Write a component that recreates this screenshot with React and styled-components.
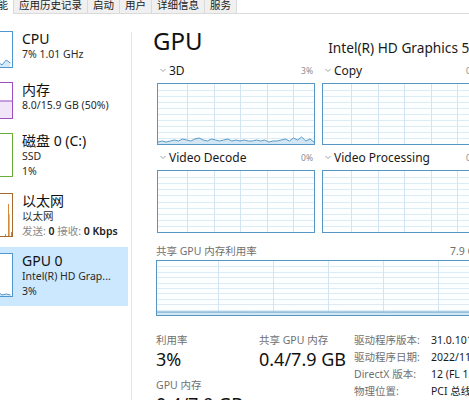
import React from 'react';
import styled, { createGlobalStyle } from 'styled-components';

const GlobalStyle = createGlobalStyle`
  html, body {
    margin: 0;
    padding: 0;
    background: #ffffff;
    overflow: hidden;
  }
  body {
    width: 469px;
    height: 400px;
    font-family: "Noto Sans", "Noto Sans CJK SC", sans-serif;
    color: #1a1a1a;
  }
`;

const Window = styled.div`
  width: 640px;
  height: 400px;
  margin-left: -60px;
  display: flex;
  flex-direction: column;
  overflow: hidden;
`;

const TabBar = styled.div`
  display: flex;
  height: 13px;
  padding-left: 10px;
  border-bottom: 1px solid #dadada;
`;

const Tab = styled.div`
  height: ${p => (p.$active ? '14px' : '13px')};
  padding: 0 5px;
  font-size: 10.5px;
  line-height: 11px;
  color: #1a1a1a;
  background: ${p => (p.$active ? '#ffffff' : '#f0f0f0')};
  border-right: 1px solid #dadada;
  white-space: nowrap;
`;

const Body = styled.div`
  flex: 1;
  display: flex;
  min-height: 0;
`;

const Sidebar = styled.div`
  width: 188px;
  flex-shrink: 0;
  padding-top: 11px;
  display: flex;
  flex-direction: column;
  gap: 1px;
`;

const Divider = styled.div`
  width: 1px;
  margin: 18px 0 0 3px;
  background: #e4e4e4;
  flex-shrink: 0;
`;

const SideItem = styled.div`
  display: flex;
  align-items: flex-start;
  gap: 9px;
  padding: 5px 0 7px 17px;
  background: ${p => (p.$selected ? '#cce8ff' : 'transparent')};
`;

const Thumb = styled.div`
  width: 56px;
  height: ${p => p.$h}px;
  margin-top: 1px;
  box-sizing: border-box;
  border: 1px solid ${p => p.$color};
  background: #ffffff;
  flex-shrink: 0;
  overflow: hidden;
  display: flex;
`;

const SideText = styled.div`
  display: flex;
  flex-direction: column;
  min-width: 0;
  white-space: nowrap;
`;

const SideTitle = styled.div`
  font-size: 14px;
  line-height: 17px;
  color: #111;
`;

const SideSub = styled.div`
  font-size: 10.5px;
  line-height: 15px;
  color: #2a2a2a;
`;

const Muted = styled.span`
  color: #8a8a8a;
`;

const Strong = styled.span`
  color: #222;
  font-weight: 600;
`;

const Main = styled.div`
  padding: 12px 0 0 24px;
  width: 326px;
  flex-shrink: 0;
  display: flex;
  flex-direction: column;
`;

const Header = styled.div`
  display: flex;
  align-items: flex-end;
  justify-content: space-between;
  white-space: nowrap;
  margin-right: -3px;
`;

const Heading = styled.div`
  font-size: 24px;
  line-height: 30px;
  margin-left: -3px;
  color: #111;
`;

const DeviceName = styled.div`
  font-size: 13.7px;
  line-height: 17px;
  color: #1a1a1a;
`;

const GraphGrid = styled.div`
  margin-top: 6px;
  display: grid;
  grid-template-columns: 158px 158px;
  column-gap: 7px;
  row-gap: 4px;
  margin-left: 1px;
`;

const Section = styled.div`
  display: flex;
  flex-direction: column;
  gap: 4px;
`;

const LabelRow = styled.div`
  height: 17px;
  display: flex;
  align-items: center;
  justify-content: space-between;
  padding: 0 2px 0 3px;
  white-space: nowrap;
`;

const LabelLeft = styled.div`
  display: flex;
  align-items: center;
  gap: 3px;
  font-size: 12px;
  color: #1a1a1a;
`;

const Percent = styled.div`
  font-size: 8.5px;
  color: #8a8a8a;
`;

const GraphBox = styled.div`
  width: ${p => p.$w}px;
  height: ${p => p.$h}px;
  box-sizing: border-box;
  border: 1px solid #5596c3;
  background: #fdfeff;
  display: flex;
  flex-shrink: 0;
`;

const SharedLabel = styled(LabelRow)`
  margin-top: 10px;
  padding: 0;
  margin-bottom: 2px;
  font-size: 10.5px;
  color: #707070;
`;

const Stats = styled.div`
  margin-top: 17px;
  display: grid;
  grid-template-columns: 103px 95px auto;
`;

const StatCol = styled.div`
  display: flex;
  flex-direction: column;
`;

const StatLabel = styled.div`
  font-size: 10.5px;
  line-height: 15px;
  height: 15px;
  color: #707070;
  white-space: nowrap;
  margin-top: ${p => p.$gap || 0}px;
`;

const StatValue = styled.div`
  font-size: 18px;
  line-height: 22px;
  height: 22px;
  color: #111;
  white-space: nowrap;
`;

const InfoTable = styled.div`
  display: grid;
  grid-template-columns: 77px auto;
  grid-auto-rows: 17px;
  font-size: 10.5px;
  line-height: 17px;
  margin-top: -1px;
  white-space: nowrap;
`;

const InfoKey = styled.div`
  color: #707070;
  height: 17px;
`;

const InfoVal = styled.div`
  color: #1a1a1a;
  height: 17px;
`;

const Chevron = () => (
  <svg width="6" height="5" viewBox="0 0 6 5">
    <path d="M0.5 1 L3 3.5 L5.5 1" fill="none" stroke="#a0a0a0" strokeWidth="1" />
  </svg>
);

const wave3d = [2, 3, 2, 3, 4, 3, 5, 4, 3, 5, 6, 4, 3, 5, 4, 3, 4, 5, 3, 4, 3, 4, 3, 3, 4, 3, 4, 2, 3, 3, 4, 5, 3, 6, 4, 7, 3, 5, 2];

const Graph = ({ width, height, step, offset, rows, data }) => {
  const w = width - 2;
  const h = height - 2;
  const vLines = [];
  for (let x = offset; x < w; x += step) vLines.push(x);
  const hLines = [];
  for (let i = 1; i < rows; i++) hLines.push(Math.round((h * i) / rows) + 0.5);
  let line = null;
  if (data) {
    const pts = data.map((v, i) => `${((w * i) / (data.length - 1)).toFixed(1)},${h - v}`);
    line = (
      <>
        <polygon points={`0,${h} ${pts.join(' ')} ${w},${h}`} fill="#d3e6f3" />
        <polyline points={pts.join(' ')} fill="none" stroke="#5b9bc6" strokeWidth="1" />
      </>
    );
  }
  return (
    <GraphBox $w={width} $h={height}>
      <svg width={w} height={h}>
        {hLines.map(y => (
          <line key={'h' + y} x1="0" x2={w} y1={y} y2={y} stroke="#dcebf4" strokeWidth="1" />
        ))}
        {vLines.map(x => (
          <line key={'v' + x} x1={Math.round(x) + 0.5} x2={Math.round(x) + 0.5} y1="0" y2={h} stroke="#d2e4f0" strokeWidth="1" />
        ))}
        {line}
      </svg>
    </GraphBox>
  );
};

const ThumbArt = ({ kind, color, h }) => {
  const w = 54;
  const ih = h - 2;
  if (kind === 'mem') {
    return (
      <svg width={w} height={ih}>
        <rect x="0" y={ih / 2} width={w} height={ih / 2} fill="#f1e6f7" />
        <line x1="0" x2={w} y1={ih / 2 + 0.5} y2={ih / 2 + 0.5} stroke={color} strokeWidth="1" />
      </svg>
    );
  }
  if (kind === 'net') {
    return (
      <svg width={w} height={ih}>
        <line x1="47.5" x2="47.5" y1={ih - 2} y2={ih} stroke="#d28a3c" strokeWidth="1" />
        <line x1="50.5" x2="50.5" y1="10" y2={ih} stroke="#d28a3c" strokeWidth="1" />
        <line x1="51.5" x2="51.5" y1="20" y2={ih} stroke="#e7b57a" strokeWidth="1" />
        <line x1="53.5" x2="53.5" y1={ih - 4} y2={ih} stroke="#d28a3c" strokeWidth="1" />
      </svg>
    );
  }
  if (kind === 'cpu' || kind === 'gpu') {
    const vals = kind === 'cpu' ? [1, 2, 1, 3, 2, 4, 2, 6, 3, 5, 2, 7, 4] : [1, 1, 2, 1, 2, 1, 3, 1, 2, 4, 1, 2, 1];
    const pts = vals.map((v, i) => `${(2 + i * 4.2).toFixed(1)},${ih - v}`);
    return (
      <svg width={w} height={ih}>
        <polygon points={`2,${ih} ${pts.join(' ')} ${2 + (vals.length - 1) * 4.2},${ih}`} fill="#d7eaf7" />
        <polyline points={pts.join(' ')} fill="none" stroke={color} strokeWidth="1" />
      </svg>
    );
  }
  return null;
};

const items = [
  { title: 'CPU', lines: ['7% 1.01 GHz'], color: '#4f96cf', kind: 'cpu', h: 37 },
  { title: '内存', lines: ['8.0/15.9 GB (50%)'], color: '#9a4fc4', kind: 'mem', h: 37 },
  { title: '磁盘 0 (C:)', lines: ['SSD', '1%'], color: '#6aad35', kind: 'disk', h: 44 },
  {
    title: '以太网',
    lines: [
      '以太网',
      <>
        <Muted>发送: </Muted>
        <Strong>0</Strong> <Muted>接收: </Muted>
        <Strong>0 Kbps</Strong>
      </>,
    ],
    color: '#a8692a',
    kind: 'net',
    h: 44,
  },
  { title: 'GPU 0', lines: ['Intel(R) HD Grap...', '3%'], color: '#4f96cf', kind: 'gpu', h: 44, selected: true },
];

const tabs = ['进程', '性能', '应用历史记录', '启动', '用户', '详细信息', '服务'];

export default function App() {
  return (
    <>
      <GlobalStyle />
      <Window>
        <TabBar>
          {tabs.map(t => (
            <Tab key={t} $active={t === '性能'}>
              {t}
            </Tab>
          ))}
        </TabBar>
        <Body>
          <Sidebar>
            {items.map(it => (
              <SideItem key={it.title} $selected={it.selected}>
                <Thumb $h={it.h} $color={it.color}>
                  <ThumbArt kind={it.kind} color={it.color} h={it.h} />
                </Thumb>
                <SideText>
                  <SideTitle>{it.title}</SideTitle>
                  {it.lines.map((l, i) => (
                    <SideSub key={i}>{l}</SideSub>
                  ))}
                </SideText>
              </SideItem>
            ))}
          </Sidebar>
          <Divider />
          <Main>
            <Header>
              <Heading>GPU</Heading>
              <DeviceName>Intel(R) HD Graphics 520</DeviceName>
            </Header>
            <GraphGrid>
              <Section>
                <LabelRow>
                  <LabelLeft>
                    <Chevron />
                    3D
                  </LabelLeft>
                  <Percent>3%</Percent>
                </LabelRow>
                <Graph width={158} height={62} step={26.6} offset={29} rows={10} data={wave3d} />
              </Section>
              <Section>
                <LabelRow>
                  <LabelLeft>
                    <Chevron />
                    Copy
                  </LabelLeft>
                  <Percent>0%</Percent>
                </LabelRow>
                <Graph width={158} height={62} step={26.6} offset={28} rows={10} />
              </Section>
              <Section>
                <LabelRow>
                  <LabelLeft>
                    <Chevron />
                    Video Decode
                  </LabelLeft>
                  <Percent>0%</Percent>
                </LabelRow>
                <Graph width={158} height={63} step={26.6} offset={29} rows={10} />
              </Section>
              <Section>
                <LabelRow>
                  <LabelLeft>
                    <Chevron />
                    Video Processing
                  </LabelLeft>
                  <Percent>0%</Percent>
                </LabelRow>
                <Graph width={158} height={63} step={26.6} offset={28} rows={10} />
              </Section>
            </GraphGrid>
            <SharedLabel>
              <span>共享 GPU 内存利用率</span>
              <span>7.9 GB</span>
            </SharedLabel>
            <Graph width={326} height={56} step={55} offset={61} rows={10} data={[3, 3, 3, 3, 3, 3, 3, 3]} />
            <Stats>
              <StatCol>
                <StatLabel>利用率</StatLabel>
                <StatValue>3%</StatValue>
                <StatLabel $gap={8}>GPU 内存</StatLabel>
                <StatValue>0.4/7.9 GB</StatValue>
              </StatCol>
              <StatCol>
                <StatLabel>共享 GPU 内存</StatLabel>
                <StatValue>0.4/7.9 GB</StatValue>
              </StatCol>
              <InfoTable>
                <InfoKey>驱动程序版本:</InfoKey>
                <InfoVal>31.0.101.2111</InfoVal>
                <InfoKey>驱动程序日期:</InfoKey>
                <InfoVal>2022/11/15</InfoVal>
                <InfoKey>DirectX 版本:</InfoKey>
                <InfoVal>12 (FL 12.1)</InfoVal>
                <InfoKey>物理位置:</InfoKey>
                <InfoVal>PCI 总线 0、设备 2</InfoVal>
              </InfoTable>
            </Stats>
          </Main>
        </Body>
      </Window>
    </>
  );
}
